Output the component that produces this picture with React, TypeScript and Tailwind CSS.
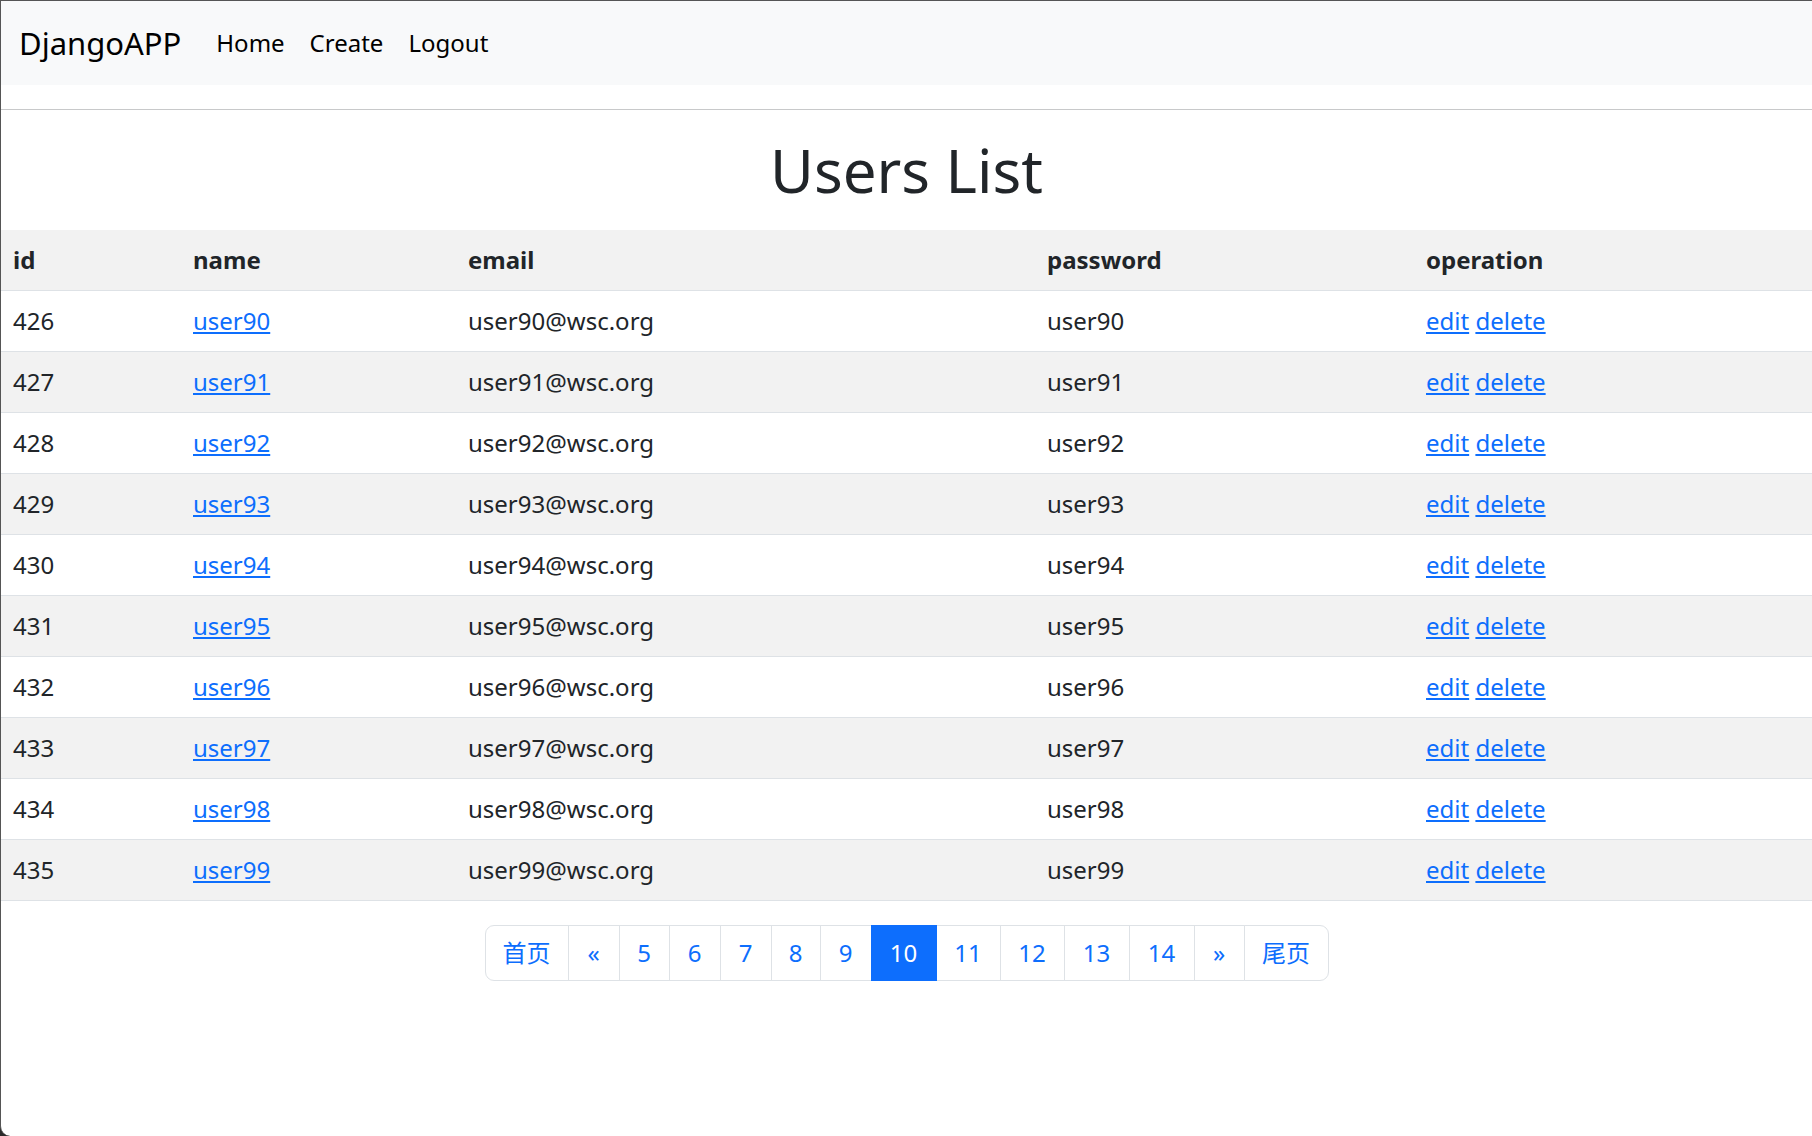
import React from "react";

const rows = [
  [426, "user90"],
  [427, "user91"],
  [428, "user92"],
  [429, "user93"],
  [430, "user94"],
  [431, "user95"],
  [432, "user96"],
  [433, "user97"],
  [434, "user98"],
  [435, "user99"],
] as const;

const pages: { label: string; w: string; active?: boolean; first?: boolean; last?: boolean }[] = [
  { label: "首页", w: "w-[84px]", first: true },
  { label: "«", w: "w-[52px]" },
  { label: "5", w: "w-[51px]" },
  { label: "6", w: "w-[52px]" },
  { label: "7", w: "w-[52px]" },
  { label: "8", w: "w-[50px]" },
  { label: "9", w: "w-[52px]" },
  { label: "10", w: "w-[66px]", active: true },
  { label: "11", w: "w-[65px]" },
  { label: "12", w: "w-[65px]" },
  { label: "13", w: "w-[66px]" },
  { label: "14", w: "w-[66px]" },
  { label: "»", w: "w-[51px]" },
  { label: "尾页", w: "w-[85px]", last: true },
];

export default function App() {
  return (
    <div className="w-[1812px] h-[1136px] bg-[#2b2b2b]">
      <div className="h-full bg-white border-l border-t border-[#555555] rounded-bl-[10px] overflow-hidden font-['Noto_Sans','Noto_Sans_CJK_SC',sans-serif] text-[#212529]">
        <nav className="h-[84px] bg-[#f8f9fa] flex items-center pl-[18px]">
          <span className="text-[31px] leading-[45px] text-black mr-[35px]">DjangoAPP</span>
          <div className="flex items-center gap-[25px] text-[24px] leading-[36px] text-black">
            <span>Home</span>
            <span>Create</span>
            <span>Logout</span>
          </div>
        </nav>
        <div className="mt-[24px] h-px bg-[#c8c9ca]" />
        <h1 className="mt-[24px] mb-[24px] text-center text-[60px] leading-[72px] font-normal">Users List</h1>
        <table className="w-full table-fixed border-collapse text-[24px] leading-[36px]">
          <colgroup>
            <col className="w-[180px]" />
            <col className="w-[275px]" />
            <col className="w-[579px]" />
            <col className="w-[379px]" />
            <col />
          </colgroup>
          <thead>
            <tr className="bg-[#f2f2f2] border-b border-[#dee2e6]">
              <th className="text-left font-bold px-[12px] py-[12px]">id</th>
              <th className="text-left font-bold px-[12px] py-[12px]">name</th>
              <th className="text-left font-bold px-[12px] py-[12px]">email</th>
              <th className="text-left font-bold px-[12px] py-[12px]">password</th>
              <th className="text-left font-bold px-[12px] py-[12px]">operation</th>
            </tr>
          </thead>
          <tbody>
            {rows.map(([id, name], i) => (
              <tr key={id} className={(i % 2 === 1 ? "bg-[#f2f2f2] " : "bg-white ") + "border-b border-[#dee2e6]"}>
                <td className="px-[12px] py-[12px]">{id}</td>
                <td className="px-[12px] py-[12px]">
                  <a href="#" className="text-[#0d6efd] underline">{name}</a>
                </td>
                <td className="px-[12px] py-[12px]">{name}@wsc.org</td>
                <td className="px-[12px] py-[12px]">{name}</td>
                <td className="px-[12px] py-[12px]">
                  <a href="#" className="text-[#0d6efd] underline">edit</a>{" "}
                  <a href="#" className="text-[#0d6efd] underline">delete</a>
                </td>
              </tr>
            ))}
          </tbody>
        </table>
        <div className="mt-[24px] flex justify-center">
          <ul className="flex">
            {pages.map((p, i) => (
              <li
                key={i}
                className={
                  p.w +
                  " h-[56px] flex items-center justify-center text-[24px] leading-[36px] border " +
                  (i > 0 ? "-ml-px " : "") +
                  (p.first ? "rounded-l-[9px] " : "") +
                  (p.last ? "rounded-r-[9px] " : "") +
                  (p.active
                    ? "bg-[#0d6efd] border-[#0d6efd] text-white relative z-10"
                    : "bg-white border-[#dee2e6] text-[#0d6efd]")
                }
              >
                {p.label}
              </li>
            ))}
          </ul>
        </div>
      </div>
    </div>
  );
}
